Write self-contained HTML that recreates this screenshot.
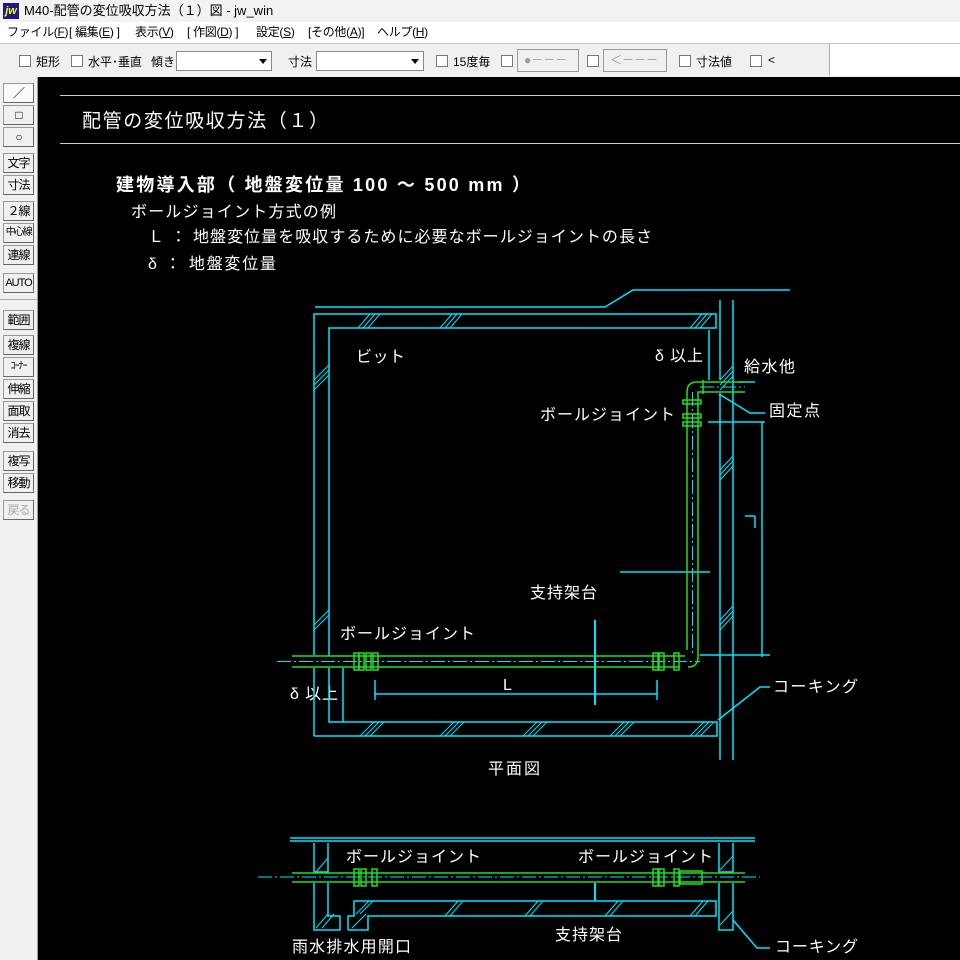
<!DOCTYPE html>
<html><head><meta charset="utf-8"><style>
*{margin:0;padding:0;box-sizing:border-box}
body{width:960px;height:960px;overflow:hidden;background:#000;font-family:"Liberation Sans","Noto Sans CJK JP",sans-serif;position:relative}
.t{position:absolute;left:0;top:0;width:960px;height:22px;background:#f2f2f2;font-size:13px;color:#000;line-height:22px}
.logo{position:absolute;left:3px;top:3px;width:16px;height:16px;background:#1a1a8c;color:#ff0;font-weight:bold;font-style:italic;font-size:11px;line-height:16px;text-align:center}
.m{position:absolute;left:0;top:22px;width:960px;height:21px;background:#fff;font-size:12px;line-height:21px;letter-spacing:-0.3px}
.m span{position:absolute;top:0;white-space:nowrap}
.tb{position:absolute;left:0;top:43px;width:960px;height:34px;background:#f0f0f0;border-top:1px solid #c8c8c8;font-size:12px}
.tb span{position:absolute;top:9px}
.cb{position:absolute;top:11px;width:12px;height:12px;border:1px solid #777;background:#fff}
.dd{position:absolute;top:7px;height:20px;border:1px solid #888;background:#fff}
.dd:after{content:"";position:absolute;right:4px;top:7px;border:4px solid transparent;border-top:5px solid #000}
.bt{position:absolute;top:5px;height:23px;border:1px solid #999;background:#f0f0f0;color:#999;font-size:12px;line-height:21px;padding-left:6px}
.lt{position:absolute;left:0;top:77px;width:38px;height:883px;background:#f0f0f0;border-right:1px solid #999}
.lt div{position:absolute;left:3px;width:31px;height:20px;border:1px solid #999;border-right-color:#666;border-bottom-color:#666;background:#f0f0f0;font-size:12px;text-align:center;line-height:18px;color:#000;white-space:nowrap;overflow:hidden;letter-spacing:-1px}
svg{position:absolute;left:0;top:0}
</style></head><body>
<div class="t"><div class="logo">jw</div><span style="position:absolute;left:24px">M40-配管の変位吸収方法（１）図 - jw_win</span></div>
<div class="m">
<span style="left:7px">ファイル(<u>F</u>)</span><span style="left:69px">[ 編集(<u>E</u>) ]</span><span style="left:135px">表示(<u>V</u>)</span><span style="left:187px">[ 作図(<u>D</u>) ]</span><span style="left:256px">設定(<u>S</u>)</span><span style="left:308px">[その他(<u>A</u>)]</span><span style="left:377px">ヘルプ(<u>H</u>)</span>
</div>
<div class="tb">
<div class="cb" style="left:19px"></div><span style="left:36px">矩形</span>
<div class="cb" style="left:71px"></div><span style="left:88px">水平･垂直</span><span style="left:151px">傾き</span>
<div class="dd" style="left:176px;width:96px"></div>
<span style="left:288px">寸法</span><div class="dd" style="left:316px;width:108px"></div>
<div class="cb" style="left:436px"></div><span style="left:453px">15度毎</span>
<div class="cb" style="left:501px"></div><div class="bt" style="left:517px;width:62px">●－－－</div>
<div class="cb" style="left:587px"></div><div class="bt" style="left:603px;width:64px">＜－－－</div>
<div class="cb" style="left:679px"></div><span style="left:696px">寸法値</span>
<div class="cb" style="left:750px"></div><span style="left:768px">&lt;</span>
<div style="position:absolute;left:829px;top:0;width:131px;height:32px;background:#fff;border-left:1px solid #aaa"></div>
</div>
<div class="lt">
<div style="top:6px;background:#fafafa">／</div><div style="top:28px">□</div><div style="top:50px">○</div>
<div style="top:76px">文字</div><div style="top:98px">寸法</div>
<div style="top:124px">２線</div><div style="top:146px;font-size:10px;letter-spacing:-1.5px">中心線</div><div style="top:168px">連線</div>
<div style="top:196px;font-size:11px">AUTO</div>
<div style="top:222px;left:0;width:37px;height:1px;border:0;border-top:1px solid #aaa;background:none"></div>
<div style="top:233px">範囲</div><div style="top:258px">複線</div><div style="top:280px;font-size:10px">ｺｰﾅｰ</div><div style="top:302px">伸縮</div><div style="top:324px">面取</div><div style="top:346px">消去</div>
<div style="top:374px">複写</div><div style="top:396px">移動</div><div style="top:423px;color:#aaa">戻る</div>
</div>
<svg width="960" height="960" viewBox="0 0 960 960">
<g fill="#fff" font-family="Liberation Sans,Noto Sans CJK JP,sans-serif" lengthAdjust="spacing" font-size="16">
<text x="82" y="127" font-size="19" textLength="246">配管の変位吸収方法（１）</text>
<text x="116" y="191" font-size="18" font-weight="bold" textLength="414">建物導入部（ 地盤変位量 100 ～ 500 mm ）</text>
<text x="131" y="217" textLength="205">ボールジョイント方式の例</text>
<text x="148" y="242" textLength="504">Ｌ ： 地盤変位量を吸収するために必要なボールジョイントの長さ</text>
<text x="148" y="269" textLength="128">δ ： 地盤変位量</text>
<text x="356" y="362" textLength="49">ビット</text>
<text x="655" y="361" textLength="48">δ 以上</text>
<text x="744" y="372" textLength="51">給水他</text>
<text x="540" y="420" textLength="135">ボールジョイント</text>
<text x="769" y="416" textLength="51">固定点</text>
<text x="530" y="598" textLength="67">支持架台</text>
<text x="340" y="639" textLength="135">ボールジョイント</text>
<text x="503" y="690">L</text>
<text x="290" y="699" textLength="48">δ 以上</text>
<text x="773" y="692" textLength="85">コーキング</text>
<text x="488" y="774" textLength="52">平面図</text>
<text x="346" y="862" textLength="135">ボールジョイント</text>
<text x="578" y="862" textLength="135">ボールジョイント</text>
<text x="555" y="940" textLength="67">支持架台</text>
<text x="292" y="952" textLength="119">雨水排水用開口</text>
<text x="775" y="952" textLength="83">コーキング</text>
</g>
<g stroke="#ccc" stroke-width="1"><line x1="60" y1="95.5" x2="960" y2="95.5"/><line x1="60" y1="143.5" x2="960" y2="143.5"/></g>
<g stroke="#00e5ff" stroke-width="1.5" fill="none">
<polyline points="315,307 605,307 633,290 790,290"/>
<polyline points="314,736 717,736 717,722 329,722 329,668"/>
<polyline points="314,655 314,314 716,314 716,328 329,328 329,656"/>
<line x1="314" y1="668" x2="314" y2="736"/>
<line x1="720" y1="300" x2="720" y2="380"/><line x1="720" y1="393" x2="720" y2="760"/>
<line x1="733" y1="300" x2="733" y2="760"/>
<line x1="709" y1="330" x2="709" y2="380"/>
<polyline points="719,394 750,413 765,413"/>
<line x1="708" y1="422" x2="765" y2="422"/>
<line x1="762" y1="422" x2="762" y2="657"/>
<line x1="700" y1="655" x2="770" y2="655"/>
<line x1="745" y1="516" x2="755" y2="516"/><line x1="755" y1="516" x2="755" y2="528"/>
<line x1="620" y1="572" x2="710" y2="572"/>
<line x1="595" y1="620" x2="595" y2="705" stroke-width="2"/>
<line x1="375" y1="694" x2="657" y2="694"/><line x1="375" y1="680" x2="375" y2="700"/><line x1="657" y1="680" x2="657" y2="700"/>
<line x1="343" y1="668" x2="343" y2="722"/>
<polyline points="718,720 760,687 770,687"/>
<line x1="738" y1="382" x2="755" y2="382"/>
<path d="M358,328l12,-14M363,328l12,-14M368,328l12,-14M440,328l12,-14M445,328l12,-14M450,328l12,-14M690,328l12,-14M695,328l12,-14M700,328l12,-14M314,380l15,-15M314,385l15,-15M314,390l15,-15M720,380l13,-14M720,385l13,-14M720,390l13,-14M720,470l13,-14M720,475l13,-14M720,480l13,-14M720,620l13,-14M720,625l13,-14M720,630l13,-14M314,625l15,-15M314,630l15,-15M360,736l14,-14M365,736l14,-14M370,736l14,-14M440,736l14,-14M445,736l14,-14M450,736l14,-14M523,736l14,-14M528,736l14,-14M533,736l14,-14M610,736l14,-14M615,736l14,-14M620,736l14,-14M690,736l14,-14M695,736l14,-14M700,736l14,-14" stroke-width="1"/>
<line x1="290" y1="838" x2="755" y2="838"/><line x1="290" y1="841" x2="755" y2="841"/>
<polyline points="314,843 314,872 328,872 328,843"/>
<polyline points="314,883 314,930 340,930 340,916 328,916 328,883"/>
<polyline points="348,930 348,916 354,916 354,901 716,901 716,916 368,916 368,930 348,930"/>
<polyline points="719,843 719,872 733,872 733,843"/>
<polyline points="719,883 719,930 733,930 733,883"/>
<line x1="595" y1="883" x2="595" y2="901" stroke-width="2"/>
<polyline points="733,920 757,948 770,948"/>
<path d="M316,872l12,-14M316,928l12,-14M322,928l12,-14M352,928l14,-14M356,914l13,-13M360,914l13,-13M445,916l13,-15M450,916l13,-15M525,916l13,-15M530,916l13,-15M605,916l13,-15M610,916l13,-15M690,916l13,-15M695,916l13,-15M720,870l13,-14M720,925l13,-14" stroke-width="1"/>
</g>
<g stroke="#00e5ff" stroke-width="1" stroke-dasharray="14,3,2,3" fill="none">
<line x1="277" y1="661.5" x2="700" y2="661.5"/>
<line x1="692.5" y1="392" x2="692.5" y2="655"/>
<line x1="258" y1="877" x2="760" y2="877"/>
<line x1="700" y1="387" x2="745" y2="387"/>
</g>
<g stroke="#22e022" stroke-width="1.5" fill="none">
<line x1="292" y1="656" x2="685" y2="656"/><line x1="292" y1="667" x2="680" y2="667"/>
<path d="M687,400 V650 M698,395 V657 Q698,667 688,667"/>
<path d="M687,400 V392 Q687,382 697,382 H745 M698,395 V392 H745"/>
<line x1="703" y1="380" x2="703" y2="394"/>
<rect x="354" y="653" width="5" height="17"/><rect x="359" y="653" width="5" height="17"/><rect x="366" y="653" width="5" height="17"/><rect x="373" y="653" width="5" height="17"/>
<rect x="653" y="653" width="5" height="17"/><rect x="659" y="653" width="5" height="17"/><rect x="674" y="653" width="5" height="17"/>
<rect x="683" y="400" width="18" height="4"/><rect x="683" y="414" width="18" height="4"/><rect x="683" y="422" width="18" height="4"/>
<line x1="292" y1="873" x2="745" y2="873"/><line x1="292" y1="882" x2="745" y2="882"/>
<rect x="354" y="869" width="5" height="17"/><rect x="361" y="869" width="5" height="17"/><rect x="372" y="869" width="5" height="17"/>
<rect x="653" y="869" width="5" height="17"/><rect x="659" y="869" width="5" height="17"/><rect x="674" y="869" width="5" height="17"/>
<rect x="680" y="871" width="22" height="13"/>
</g>
</svg>
</body></html>
